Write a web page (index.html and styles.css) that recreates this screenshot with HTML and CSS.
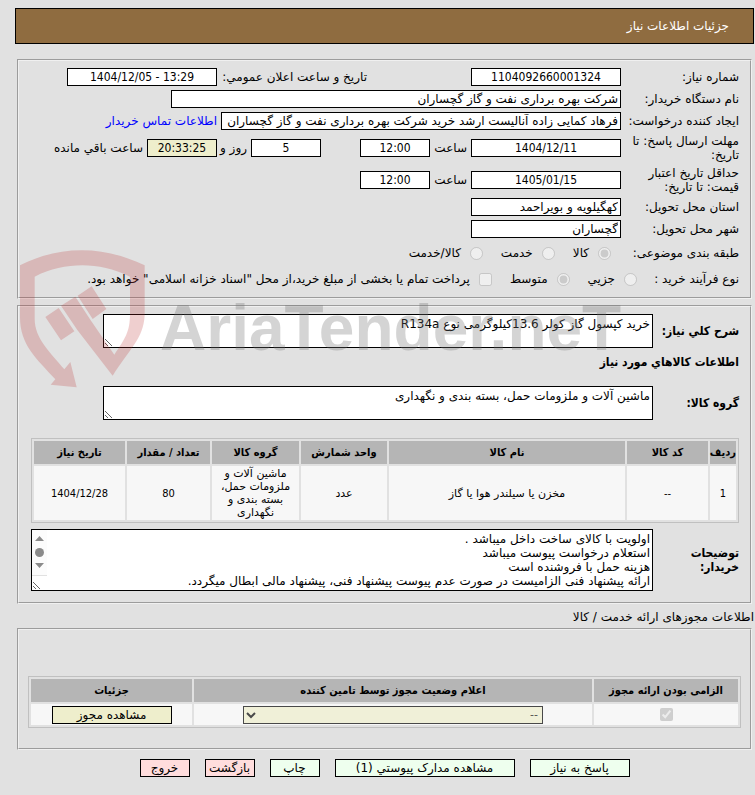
FILE: index.html
```html
<!DOCTYPE html>
<html lang="fa" dir="rtl">
<head>
  <meta charset="UTF-8">
  <meta name="viewport" content="width=device-width, initial-scale=1.0">
  <title>جزئیات اطلاعات نیاز</title>
  <link rel="stylesheet" href="styles.css">
</head>
<body>
  <header class="page-header">جزئیات اطلاعات نیاز</header>

  <main class="content">
    <fieldset class="panel">
      <div class="row">
        <label class="label" for="needNo">شماره نیاز:</label>
        <input class="field center w150" id="needNo" value="1104092660001324" readonly>
        <div class="side-group wide">
          <label class="side-label" for="announceDate">تاریخ و ساعت اعلان عمومي:</label>
          <input class="field center w150" id="announceDate" value="1404/12/05 - 13:29" dir="ltr" readonly>
        </div>
      </div>
      <div class="row">
        <label class="label" for="buyerOrg">نام دستگاه خریدار:</label>
        <input class="field w450" id="buyerOrg" value="شرکت بهره برداری نفت و گاز گچساران" readonly>
      </div>
      <div class="row">
        <label class="label" for="creator">ایجاد کننده درخواست:</label>
        <input class="field w400" id="creator" value="فرهاد کمایی زاده آنالیست ارشد خرید شرکت بهره برداری نفت و گاز گچساران" readonly>
        <a class="contact-link" href="#">اطلاعات تماس خریدار</a>
      </div>
      <div class="row">
        <label class="label" for="replyDate">مهلت ارسال پاسخ: تا تاریخ:</label>
        <input class="field center w150" id="replyDate" value="1404/12/11" readonly>
        <label class="time-label" for="replyTime">ساعت</label>
        <input class="field center w70" id="replyTime" value="12:00" readonly>
        <div class="side-group">
          <input class="field center w70" id="daysLeft" value="5" readonly>
          <label class="days-label" for="daysLeft">روز و</label>
          <input class="field center w70 highlight" id="timeLeft" value="20:33:25" readonly>
          <label for="timeLeft">ساعت باقي مانده</label>
        </div>
      </div>
      <div class="row">
        <label class="label" for="priceDate">حداقل تاریخ اعتبار قیمت: تا تاریخ:</label>
        <input class="field center w150" id="priceDate" value="1405/01/15" readonly>
        <label class="time-label" for="priceTime">ساعت</label>
        <input class="field center w70" id="priceTime" value="12:00" readonly>
      </div>
      <div class="row">
        <label class="label" for="province">استان محل تحویل:</label>
        <input class="field w150" id="province" value="کهگیلویه و بویراحمد" readonly>
      </div>
      <div class="row">
        <label class="label" for="city">شهر محل تحویل:</label>
        <input class="field w150" id="city" value="گچساران" readonly>
      </div>
      <div class="row choices">
        <span class="label">طبقه بندی موضوعی:</span>
        <label class="choice"><input type="radio" name="subject" checked disabled> کالا</label>
        <label class="choice"><input type="radio" name="subject" disabled> خدمت</label>
        <label class="choice"><input type="radio" name="subject" disabled> کالا/خدمت</label>
      </div>
      <div class="row choices">
        <span class="label short">نوع فرآیند خرید :</span>
        <label class="choice"><input type="radio" name="process" disabled> جزیي</label>
        <label class="choice"><input type="radio" name="process" checked disabled> متوسط</label>
        <label class="choice"><input type="checkbox" disabled> پرداخت تمام یا بخشی از مبلغ خرید،از محل "اسناد خزانه اسلامی" خواهد بود.</label>
      </div>
    </fieldset>

    <fieldset class="panel needs">
      <div class="area-row">
        <label class="area-label" for="needDesc">شرح کلي نیاز:</label>
        <textarea class="area small" id="needDesc" readonly>خرید کپسول گاز کولر 13.6کیلوگرمی نوع R134a</textarea>
      </div>
      <h2 class="section-title">اطلاعات کالاهاي مورد نیاز</h2>
      <div class="area-row">
        <label class="area-label" for="goodsGroup">گروه کالا:</label>
        <textarea class="area small" id="goodsGroup" readonly>ماشین آلات و ملزومات حمل، بسته بندی و نگهداری</textarea>
      </div>
      <table class="grid goods">
        <colgroup>
          <col class="c-row"><col class="c-code"><col><col class="c-unit"><col class="c-group"><col class="c-qty"><col class="c-date">
        </colgroup>
        <thead>
          <tr><th>ردیف</th><th>کد کالا</th><th>نام کالا</th><th>واحد شمارش</th><th>گروه کالا</th><th>تعداد / مقدار</th><th>تاریخ نیاز</th></tr>
        </thead>
        <tbody>
          <tr><td class="num">1</td><td class="num">--</td><td>مخزن یا سیلندر هوا یا گاز</td><td>عدد</td><td>ماشین آلات و ملزومات حمل، بسته بندی و نگهداری</td><td class="num">80</td><td class="num">1404/12/28</td></tr>
        </tbody>
      </table>
      <div class="area-row notes-row">
        <label class="area-label" for="notes">توضیحات خریدار:</label>
        <div class="notes-box">
          <textarea class="area notes" id="notes" readonly>اولویت با کالای ساخت داخل میباشد .
استعلام درخواست پیوست میباشد
هزینه حمل با فروشنده است
ارائه پیشنهاد فنی الزامیست در صورت عدم پیوست پیشنهاد فنی، پیشنهاد مالی ابطال میگردد.
</textarea>
          <svg class="scrollbar" viewBox="0 0 15 46" aria-hidden="true">
            <path fill="#fcfcfc" d="M0 0H15V45H0Z"/>
            <path fill="#e1e1e1" d="M0 45H15V46H0Z"/>
            <path fill="#8b8b8b" d="M3 11L7.500 6L12 11ZM3 33L7.500 38L12 33Z"/>
            <circle fill="#8b8b8b" cx="7.500" cy="22.500" r="4.500"/>
          </svg>
        </div>
      </div>
    </fieldset>

    <p class="caption">اطلاعات مجوزهای ارائه خدمت / کالا</p>

    <fieldset class="panel permits">
      <table class="grid">
        <colgroup>
          <col class="c-required"><col><col class="c-details">
        </colgroup>
        <thead>
          <tr><th>الزامی بودن ارائه مجوز</th><th>اعلام وضعیت مجوز توسط تامین کننده</th><th>جزئیات</th></tr>
        </thead>
        <tbody>
          <tr>
            <td><input class="tick" type="checkbox" aria-label="الزامی بودن ارائه مجوز" checked disabled></td>
            <td><select class="status-select" aria-label="اعلام وضعیت مجوز" disabled><option>--</option></select></td>
            <td><button class="btn view" type="button">مشاهده مجوز</button></td>
          </tr>
        </tbody>
      </table>
    </fieldset>

    <div class="actions">
      <button class="btn green w100" type="button">پاسخ به نیاز</button>
      <button class="btn green w180" type="button">مشاهده مدارک پیوستي (1)</button>
      <button class="btn green" type="button">چاپ</button>
      <button class="btn red" type="button">بازگشت</button>
      <button class="btn red" type="button">خروج</button>
    </div>

    <div class="watermark" dir="ltr" aria-hidden="true">
      <svg class="shield" viewBox="60 44 375 414">
        <path d="M60 90C120 60 180 45 245 45S370 60 434 90V240C430 310 390 340 338 421L232 284L183 211L226 184L272 255L343 358C375 310 390 290 390 235V124C340 100 295 90 247 90S150 100 104 124V250C104 310 150 350 193 402L211 380L230 456L152 448L166 432C110 370 60 330 60 245Z"/>
        <path d="M136 245L176 218L223 288L183 315ZM233 181L275 153L319 221L278 251Z"/>
      </svg>
      <span class="brand">AriaTender.neT</span>
    </div>
  </main>
</body>
</html>
```
FILE: styles.css
```css
* {
  box-sizing: border-box;
}

body {
  margin: 8px 1px 0 15px;
  background: #e1e1e1;
  color: #000;
  font-family: "DejaVu Sans", sans-serif;
  font-size: 12px;
  line-height: 14px;
}

input,
textarea,
select,
button {
  font: inherit;
  color: inherit;
}

.page-header {
  padding: 10px 24px;
  border: 1px solid #000;
  background: #8f6c40;
  color: #fff;
}

.content {
  position: relative;
  margin-top: 15px;
}

.panel {
  min-width: 0;
  margin: 0 2px 6px;
  padding: 5px 11px 5px 12px;
  border: 2px groove #f0f0f0;
}

/* Request details */
.row {
  display: flex;
  align-items: center;
  gap: 4px;
  padding: 2px 0;
}

.label {
  flex: none;
  width: 114px;
}

.label.short {
  width: 88px;
  white-space: nowrap;
}

.field {
  height: 18px;
  margin: 0;
  padding: 0 2px;
  border: 1px solid #000;
  border-radius: 0;
  background: #fff;
}

.field.center {
  font-family: "DejaVu Sans Condensed", "DejaVu Sans", sans-serif;
  text-align: center;
}

.field.highlight {
  background: #eeeecc;
}

.w70 { width: 70px; }
.w150 { width: 150px; }
.w400 { width: 400px; }
.w450 { width: 450px; }

.side-group {
  display: flex;
  align-items: center;
  gap: 4px;
  margin-right: 35px;
}

.side-group.wide {
  margin-right: 100px;
}

.side-label {
  width: 146px;
  white-space: nowrap;
}

.time-label {
  width: 33px;
}

.days-label {
  width: 26px;
  white-space: nowrap;
}

.contact-link {
  color: #00f;
  text-decoration: none;
}

.choices {
  height: 26px;
}

.choice {
  display: flex;
  align-items: center;
  gap: 9px;
  margin-right: 10px;
  margin-left: 4px;
  white-space: nowrap;
}

.choice input {
  width: 13px;
  height: 13px;
  margin: 0;
}

/* Goods */
.needs {
  padding-top: 7px;
  padding-bottom: 11px;
}

.area-row {
  display: flex;
  align-items: center;
}

.area-label {
  flex: none;
  width: 86px;
  font-family: "DejaVu Sans Condensed", "DejaVu Sans", sans-serif;
  font-weight: bold;
}

.area {
  display: block;
  margin: 0;
  padding: 2px;
  border: 1px solid #000;
  border-radius: 0;
  background: #fff;
}

.area.small {
  width: 550px;
  height: 34px;
}

.notes-box {
  position: relative;
  flex: 1;
}

.area.notes {
  width: 100%;
  height: 62px;
}

.scrollbar {
  position: absolute;
  top: 1px;
  left: 1px;
  width: 15px;
  height: 46px;
  pointer-events: none;
}

.notes-row {
  margin-top: 6px;
}

.section-title {
  margin: 7px 0 17px;
  font-family: "DejaVu Sans Condensed", "DejaVu Sans", sans-serif;
  font-size: 12px;
}

.grid {
  width: 100%;
  border: 1px solid #c0c0c0;
  border-spacing: 2px;
  table-layout: fixed;
  font-size: 11px;
  line-height: 13px;
  text-align: center;
}

.grid th {
  height: 23px;
  padding: 0;
  background: #b5b5b5;
}

.grid td {
  padding: 1px;
  background: #f7f7f7;
}

.grid th,
.grid .num {
  font-family: "DejaVu Sans Condensed", "DejaVu Sans", sans-serif;
}

.goods {
  margin-top: 18px;
}

.c-row { width: 26px; }
.c-code { width: 81px; }
.c-unit { width: 86px; }
.c-group { width: 87px; }
.c-qty { width: 83px; }
.c-date { width: 91px; }
.c-required { width: 144px; }
.c-details { width: 161px; }

/* Permits */
.caption {
  margin: 6px 0 4px;
}

.permits {
  margin-bottom: 9px;
  padding: 46px 9px 20px;
}

.permits td {
  height: 21px;
}

.tick {
  display: block;
  width: 13px;
  height: 13px;
  margin: 0 auto;
}

.status-select {
  display: block;
  width: 300px;
  height: 18px;
  margin: 0 auto;
  padding: 0;
  border: 1px solid #000;
  border-radius: 0;
  background: #eeeecc;
  opacity: 0.7;
}

.btn {
  width: 50px;
  height: 18px;
  padding: 0;
  border: 1px solid #000;
  border-radius: 0;
  font-family: "DejaVu Sans", sans-serif;
  font-size: 12px;
  line-height: 14px;
  white-space: nowrap;
}

.btn.view {
  width: 120px;
  background: #eeeecc;
}

.btn.green { background: #eeffee; }
.btn.red { background: #ffdddd; }
.btn.w100 { width: 100px; }
.btn.w180 { width: 180px; }

.actions {
  display: flex;
  justify-content: center;
  gap: 15px;
}

/* Watermark over the panels */
.watermark {
  position: absolute;
  top: 191px;
  left: 5px;
  display: flex;
  gap: 15px;
  pointer-events: none;
}

.shield {
  width: 125px;
  height: 138px;
  fill: #bb2929;
  opacity: 0.22;
}

.brand {
  color: #737373;
  font-family: "Liberation Sans", sans-serif;
  font-size: 64px;
  font-weight: bold;
  line-height: 156px;
  opacity: 0.3;
}
```
